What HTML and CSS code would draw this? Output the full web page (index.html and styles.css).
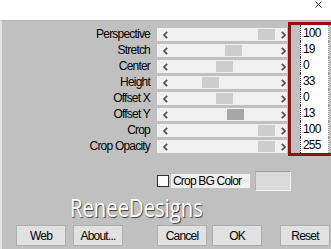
FILE: index.html
```html
<!DOCTYPE html>
<html lang="en">
<head>
    <meta charset="UTF-8">
    <meta name="viewport" content="width=device-width, initial-scale=1.0">
    <title>Perspective</title>
    <link rel="stylesheet" href="styles.css">
</head>
<body>
<div class="window">
    <div class="titlebar">
        <svg class="close" width="7" height="7" viewBox="0 0 7 7">
            <path d="M0.5 0.5 L6.5 6.5 M6.5 0.5 L0.5 6.5" stroke="#333" stroke-width="1" fill="none"/>
        </svg>
    </div>

    <div class="dialog">
        <div class="params">
            <div class="sliders">
                <div class="row">
                    <label>Perspective</label>
                    <div class="scroll">
                        <span class="arrow"><svg width="5" height="8" viewBox="0 0 5 8"><polyline points="4.2,0.8 1,4 4.2,7.2"/></svg></span>
                        <div class="track"><span class="thumb" style="margin-left:88px"></span></div>
                        <span class="arrow"><svg width="5" height="8" viewBox="0 0 5 8"><polyline points="0.8,0.8 4,4 0.8,7.2"/></svg></span>
                    </div>
                </div>
                <div class="row">
                    <label>Stretch</label>
                    <div class="scroll">
                        <span class="arrow"><svg width="5" height="8" viewBox="0 0 5 8"><polyline points="4.2,0.8 1,4 4.2,7.2"/></svg></span>
                        <div class="track"><span class="thumb" style="margin-left:55px"></span></div>
                        <span class="arrow"><svg width="5" height="8" viewBox="0 0 5 8"><polyline points="0.8,0.8 4,4 0.8,7.2"/></svg></span>
                    </div>
                </div>
                <div class="row">
                    <label>Center</label>
                    <div class="scroll">
                        <span class="arrow"><svg width="5" height="8" viewBox="0 0 5 8"><polyline points="4.2,0.8 1,4 4.2,7.2"/></svg></span>
                        <div class="track"><span class="thumb" style="margin-left:46px"></span></div>
                        <span class="arrow"><svg width="5" height="8" viewBox="0 0 5 8"><polyline points="0.8,0.8 4,4 0.8,7.2"/></svg></span>
                    </div>
                </div>
                <div class="row">
                    <label>Height</label>
                    <div class="scroll">
                        <span class="arrow"><svg width="5" height="8" viewBox="0 0 5 8"><polyline points="4.2,0.8 1,4 4.2,7.2"/></svg></span>
                        <div class="track"><span class="thumb" style="margin-left:32px"></span></div>
                        <span class="arrow"><svg width="5" height="8" viewBox="0 0 5 8"><polyline points="0.8,0.8 4,4 0.8,7.2"/></svg></span>
                    </div>
                </div>
                <div class="row">
                    <label>Offset X</label>
                    <div class="scroll">
                        <span class="arrow"><svg width="5" height="8" viewBox="0 0 5 8"><polyline points="4.2,0.8 1,4 4.2,7.2"/></svg></span>
                        <div class="track"><span class="thumb" style="margin-left:46px"></span></div>
                        <span class="arrow"><svg width="5" height="8" viewBox="0 0 5 8"><polyline points="0.8,0.8 4,4 0.8,7.2"/></svg></span>
                    </div>
                </div>
                <div class="row">
                    <label>Offset Y</label>
                    <div class="scroll">
                        <span class="arrow"><svg width="5" height="8" viewBox="0 0 5 8"><polyline points="4.2,0.8 1,4 4.2,7.2"/></svg></span>
                        <div class="track"><span class="thumb thumb-active" style="margin-left:57px"></span></div>
                        <span class="arrow"><svg width="5" height="8" viewBox="0 0 5 8"><polyline points="0.8,0.8 4,4 0.8,7.2"/></svg></span>
                    </div>
                </div>
                <div class="row">
                    <label>Crop</label>
                    <div class="scroll">
                        <span class="arrow"><svg width="5" height="8" viewBox="0 0 5 8"><polyline points="4.2,0.8 1,4 4.2,7.2"/></svg></span>
                        <div class="track"><span class="thumb" style="margin-left:88px"></span></div>
                        <span class="arrow"><svg width="5" height="8" viewBox="0 0 5 8"><polyline points="0.8,0.8 4,4 0.8,7.2"/></svg></span>
                    </div>
                </div>
                <div class="row">
                    <label>Crop Opacity</label>
                    <div class="scroll">
                        <span class="arrow"><svg width="5" height="8" viewBox="0 0 5 8"><polyline points="4.2,0.8 1,4 4.2,7.2"/></svg></span>
                        <div class="track"><span class="thumb" style="margin-left:88px"></span></div>
                        <span class="arrow"><svg width="5" height="8" viewBox="0 0 5 8"><polyline points="0.8,0.8 4,4 0.8,7.2"/></svg></span>
                    </div>
                </div>
            </div>

            <!-- valores marcados em vermelho -->
            <div class="values">
                <div class="value">100</div>
                <div class="value">19</div>
                <div class="value">0</div>
                <div class="value">33</div>
                <div class="value">0</div>
                <div class="value">13</div>
                <div class="value">100</div>
                <div class="value">255</div>
            </div>
        </div>

        <div class="extras">
            <span class="checkbox"></span>
            <span class="check-label">Crop BG Color</span>
            <span class="swatch"></span>
        </div>

        <div class="brand"><span>ReneeDesigns</span></div>

        <div class="actions">
            <div class="group">
                <button class="btn">Web</button>
                <button class="btn">About...</button>
            </div>
            <div class="group group-main">
                <button class="btn">Cancel</button>
                <button class="btn">OK</button>
            </div>
            <button class="btn btn-reset">Reset</button>
        </div>
    </div>
</div>
</body>
</html>
```

FILE: styles.css
```css
body {
    margin: 0;
    padding: 0;
    width: 331px;
    height: 249px;
    overflow: hidden;
    font-family: "Liberation Sans", Arial, sans-serif;
    font-size: 12px;
    letter-spacing: -0.8px;
    color: #000;
    background: #fff;
}

.window {
    width: 331px;
    height: 249px;
    overflow: hidden;
}

.titlebar {
    height: 20px;
    background: #fff;
    display: flex;
    justify-content: flex-end;
    align-items: flex-start;
    padding: 1px 9px 0 0;
    box-sizing: border-box;
}

.dialog {
    height: 229px;
    background: #c0c0c0;
    border-left: 2px solid #e2e2e2;
    border-top: 1px solid #b6b6b6;
    box-sizing: border-box;
}

.params {
    display: flex;
    align-items: flex-start;
    margin-top: -1px;
}

.sliders {
    margin-top: 8px;
}

.row {
    display: grid;
    grid-template-columns: 148px 130px;
    column-gap: 7px;
    height: 16px;
}

.row label {
    text-align: right;
    line-height: 13px;
    height: 13px;
    white-space: nowrap;
}

/* Barras de rolagem */
.scroll {
    display: flex;
    height: 13px;
    background: #f0f0f0;
}

.arrow {
    display: flex;
    align-items: center;
    padding-left: 6px;
    width: 7px;
}

.arrow:last-child {
    width: 6px;
}

.arrow polyline {
    fill: none;
    stroke: #505050;
    stroke-width: 1.7;
}

.track {
    flex: 1;
    padding-top: 1px;
}

.thumb {
    display: block;
    width: 17px;
    height: 11px;
    background: #cdcdcd;
}

.thumb-active {
    background: #a6a6a6;
}

.values {
    margin: 2px 0 0 1px;
    width: 45px;
    border: 3px solid #8c1410;
    border-right: none;
    padding-left: 9px;
    box-sizing: border-box;
}

.value {
    width: 29px;
    height: 16px;
    line-height: 16px;
    padding-left: 2px;
    box-sizing: border-box;
    background: #fff;
    border-left: 1px dotted #333;
    border-right: 1px dotted #888;
}

.extras {
    display: flex;
    align-items: center;
    height: 20px;
    margin-top: 15px;
    padding-left: 155px;
}

.checkbox {
    width: 10px;
    height: 10px;
    background: #fff;
    border: 1px solid #333;
}

.check-label {
    margin-left: 2px;
    width: 79px;
    height: 14px;
    line-height: 14px;
    padding-left: 2px;
    box-sizing: border-box;
    background: #f0f0f0;
}

.swatch {
    margin-left: 5px;
    width: 36px;
    height: 20px;
    box-sizing: border-box;
    background: #dadada;
    border-top: 1px solid #9a9a9a;
    border-left: 1px solid #b0b0b0;
    border-right: 1px solid #f4f4f4;
    border-bottom: 1px solid #f4f4f4;
}

.brand {
    height: 32px;
    line-height: 32px;
    padding-left: 68px;
    font-family: "Open Sans", sans-serif;
    font-size: 25px;
    letter-spacing: 0;
    color: #fff;
    text-shadow: 1px 1px 1px #3c3c3c;
}

.brand span {
    display: inline-block;
    transform: scaleX(0.81);
    transform-origin: left center;
}

/* Botões */
.actions {
    display: flex;
    margin-top: 2px;
    padding-left: 14px;
}

.group {
    display: flex;
    gap: 7px;
}

.group-main {
    margin-left: 34px;
    gap: 5px;
}

.btn {
    width: 50px;
    height: 21px;
    padding: 0;
    margin: 0;
    font-family: inherit;
    font-size: 12px;
    letter-spacing: -0.8px;
    color: #000;
    background: #e1e1e1;
    border: 1px solid #adadad;
}

.btn-reset {
    margin-left: 18px;
}
```
